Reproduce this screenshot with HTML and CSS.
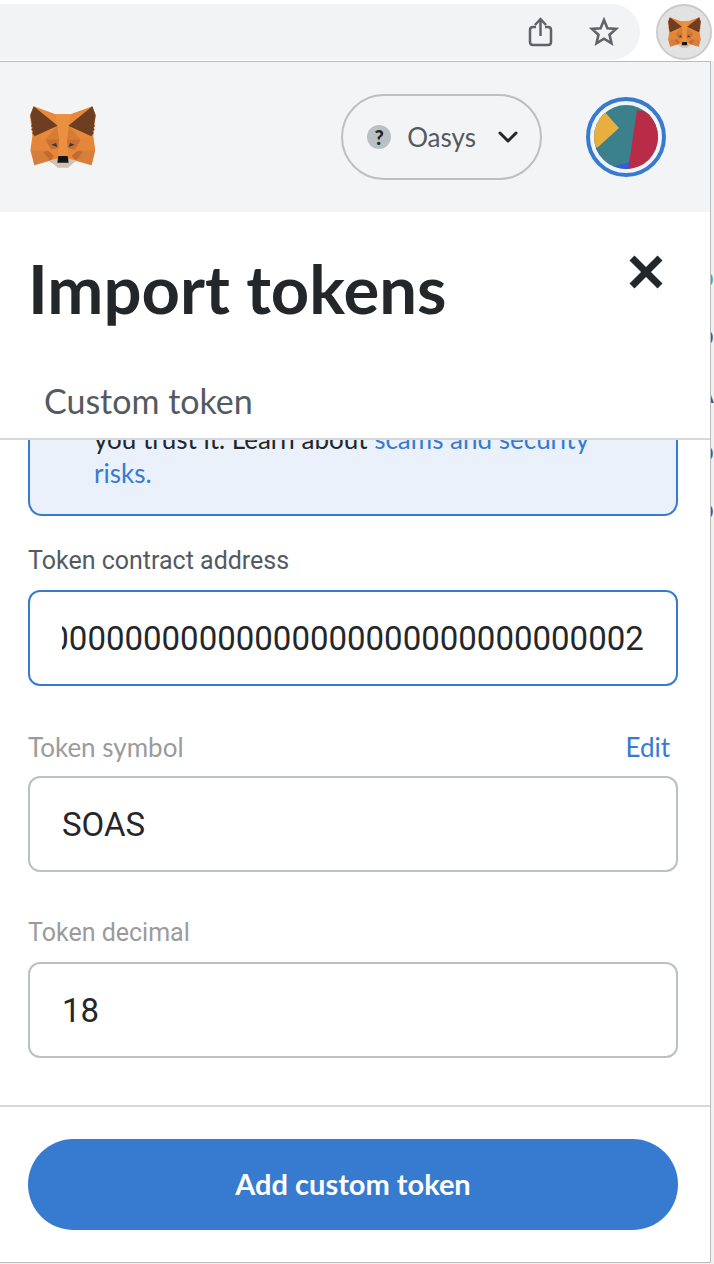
FILE: index.html
```html
<!DOCTYPE html>
<html lang="en">
<head>
<meta charset="utf-8">
<meta name="viewport" content="width=device-width, initial-scale=1">
<title>Import tokens</title>
<link rel="stylesheet" href="styles.css">
</head>
<body>
<svg class="sprite" aria-hidden="true">
  <symbol id="fox" viewBox="45 33 196 186">
    <path fill="#e8883a" d="M55 34l66 24h44l66-24 10 27-7 63 6 42-12 45-46-13-24 16h-32l-24-16-45 13-12-45 6-42-7-63z"/>
    <path fill="#d67f3c" d="M47 166h52l3 30-45 14zM239 166h-52l-3 30 45 14z"/>
    <path fill="#e48639" d="M58 124l34 8 7 34H47zM228 124l-34 8-7 34h52z"/>
    <path fill="#d67c35" d="M126 92l-36 42 41-1zM160 92l36 42-41-1z"/>
    <path fill="#cb6f30" d="M90 134l41-1 2 27-31 6zM196 134l-41-1-2 27 31 6z"/>
    <path fill="#e58a43" d="M90 134l17 30-8 4zM196 134l-17 30 8 4z"/>
    <path fill="#c46930" d="M84 171l16-4 17 15-12 16zM202 171l-16-4-17 15 12 16z"/>
    <path fill="#e58639" d="M100 167l33-8-6 26-20 13 9-14zM186 167l-33-8 6 26-20 13-9-14z"/>
    <path fill="#ea9040" d="M121 58h44l-10 75 4 52h-32l4-52z"/>
    <path fill="#6d3e22" d="M55 34l72 58-69 32-7-10 3-5-6-5 4-6-5-5 3-4-5-28zM231 34l-72 58 69 32 7-10-3-5 6-5-4-6 5-5-3-4 5-28z"/>
    <path fill="#d3c2b2" d="M103 196l24-5h32l24 5-24 22h-32z"/>
    <path fill="#161616" d="M129 183h28l3 20h-34z"/>
    <path fill="#2c3c4b" d="M108 149l14-5 4 12zM178 149l-14-5-4 12z"/>
  </symbol>
</svg>
<div class="shell">
  <div class="toolbar">
    <div class="omnibox">
      <button class="icon-button" aria-label="Share">
        <svg width="26" height="32" viewBox="0 0 26 32" fill="none" stroke="#5f6368" stroke-width="2.500"><path d="M9 11H6q-3 0-3 3v12q0 3 3 3h15q3 0 3-3V14q0-3-3-3h-3"/><path d="M13.500 20V4M8 9l5.500-6L19 9"/></svg>
      </button>
      <button class="icon-button" aria-label="Bookmark">
        <svg width="30" height="30" viewBox="0 0 30 30" fill="none" stroke="#5f6368" stroke-width="2.600"><path d="M15 3l3.400 8.200 8.700.7-6.600 5.800 2 8.600L15 21.700l-7.500 4.600 2-8.600-6.600-5.800 8.700-.7z"/></svg>
      </button>
    </div>
    <button class="extension" aria-label="MetaMask"><svg width="33" height="31"><use href="#fox"/></svg></button>
  </div>
  <div class="stage">
    <main class="popup">
      <header class="header">
        <svg class="logo" width="66" height="62" role="img" aria-label="MetaMask"><use href="#fox"/></svg>
        <button class="network">
          <span class="network-mark">?</span>
          <span class="network-name">Oasys</span>
          <svg width="20" height="13" viewBox="0 0 20 13" fill="none" stroke="#24272a" stroke-width="3" stroke-linecap="round" stroke-linejoin="round"><path d="M2 2l8 8 8-8"/></svg>
        </button>
        <button class="account" aria-label="Account">
          <svg width="64" height="64" viewBox="0 0 64 64"><clipPath id="disc"><circle cx="32" cy="32" r="32"/></clipPath><g clip-path="url(#disc)"><path fill="#3a818c" d="M0 0h64v64H0z"/><path fill="#e8ae3e" d="M9 5l16 18L3 43l-6-10z"/><path fill="#345be0" d="M0 41l3 2 4 9-7-3zM18 62l18-5v8H18z"/><path fill="#b82c48" d="M43 5l25 4v56H34z"/></g></svg>
        </button>
      </header>
      <div class="heading">
        <div class="title-row">
          <h1>Import tokens</h1>
          <button class="close" aria-label="Close"><svg width="34" height="34" viewBox="0 0 34 34" stroke="#24272a" stroke-width="7"><path d="M3 3l28 28M31 3L3 31"/></svg></button>
        </div>
        <button class="tab">Custom token</button>
      </div>
      <form class="fields" id="token-form">
        <p class="notice">you trust it. Learn about <a href="#">scams and security risks.</a></p>
        <div class="field active">
          <label for="address">Token contract address</label>
          <input id="address" type="text" value="0x0000000000000000000000000000000000000002">
        </div>
        <div class="field muted">
          <div class="label-row"><label for="symbol">Token symbol</label><button type="button" class="edit">Edit</button></div>
          <input id="symbol" type="text" value="SOAS">
        </div>
        <div class="field muted">
          <label for="decimal">Token decimal</label>
          <input id="decimal" type="text" inputmode="numeric" value="18">
        </div>
      </form>
      <footer class="footer"><button class="submit" form="token-form">Add custom token</button></footer>
    </main>
    <div class="backdrop" aria-hidden="true"><span class="green">o</span><span>o</span><span>A</span><span>o</span><span>o</span></div>
  </div>
</div>
<script src="script.js"></script>
</body>
</html>
```
FILE: styles.css
```css
* { box-sizing: border-box; }
body { margin: 0; background: #fff; color: #24272a; font-family: Lato, "Liberation Sans", sans-serif; }
button { padding: 0; border: 0; background: none; color: inherit; font: inherit; }
svg { display: block; }
.sprite { position: absolute; width: 0; height: 0; }
.shell { display: flex; flex-direction: column; height: 100vh; }
.toolbar { display: flex; align-items: center; gap: 16px; height: 61px; padding: 4px 2px 1px 0; }
.omnibox { display: flex; flex: 1; align-items: center; justify-content: flex-end; gap: 36px; height: 56px; padding-right: 21px; border-radius: 0 28px 28px 0; background: #f1f3f4; }
.extension { display: grid; place-items: center; width: 56px; height: 56px; border: 2px solid #ccc; border-radius: 50%; background: #e2e2e2; }
.stage { display: flex; flex: 1; min-height: 0; padding-bottom: 1px; background: #f1f1f1; }
.popup { display: flex; flex: 1; flex-direction: column; min-width: 0; border: 1px solid #bbb; border-left: 0; background: #fff; }
.header { display: flex; align-items: center; height: 150px; padding: 0 44px 0 30px; background: #f2f4f6; flex: none; }
.network { display: flex; align-items: center; height: 86px; margin-left: auto; padding: 0 22px 0 24px; border: 2px solid #bbc0c5; border-radius: 43px; color: #535a61; font-size: 26px; }
.network-mark { display: grid; place-items: center; width: 24px; height: 24px; margin-right: 16px; border-radius: 50%; background: #bbc0c5; color: #24272a; font-size: 20px; font-weight: 900; line-height: 24px; }
.network-name { margin-right: 22px; }
.account { display: grid; place-items: center; width: 80px; height: 80px; margin-left: 44px; border: 4px solid #377bd1; border-radius: 50%; }
.heading { flex: none; padding: 38px 47px 12px 28px; border-bottom: 2px solid #d6d9dc; }
.title-row { display: flex; align-items: flex-start; justify-content: space-between; height: 126px; }
h1 { margin: 0; font-size: 67px; font-weight: 700; line-height: 76px; }
.close { margin-top: 5px; }
.tab { display: block; height: 50px; padding: 0 16px; color: #535a61; font-size: 34px; line-height: 50px; }
.fields { display: flex; flex: 1; flex-direction: column; justify-content: flex-end; gap: 44px; min-height: 0; padding: 0 32px 47px 28px; overflow: hidden; }
.notice { margin: 0 0 -16px; padding: 24px 64px; border: 2px solid #377bd1; border-radius: 14px; background: #eaf1fa; font-size: 26px; line-height: 34px; }
a, .edit { color: #377bd1; text-decoration: none; }
.field { display: flex; flex-direction: column; gap: 12px; color: #535a61; font-family: Roboto, sans-serif; font-size: 25px; line-height: 34px; }
.muted { color: #9b9b9b; }
.label-row { display: flex; justify-content: space-between; padding-right: 8px; font-family: Lato, sans-serif; font-size: 26px; }
.field input { width: 100%; height: 96px; padding: 0 32px; border: 2px solid #bbc0c5; border-radius: 12px; background: #fff; color: #24272a; font-family: Roboto, sans-serif; font-size: 33px; outline: 0; }
.field.active input { border-color: #377bd1; }
.footer { flex: none; padding: 32px 32px 32px 28px; border-top: 2px solid #d6d9dc; }
.submit { width: 100%; height: 91px; padding-bottom: 2px; border-radius: 46px; background: #377bd1; color: #fff; font-size: 29px; font-weight: 700; }
.backdrop { display: flex; flex-direction: column; align-items: flex-end; width: 3px; padding-top: 186px; overflow: hidden; color: #535a61; font-size: 28px; line-height: 58px; }
.green { color: #5fa08c; }
```
FILE: script.js
```js
const address = document.getElementById("address");
address.scrollLeft = address.scrollWidth;
```
